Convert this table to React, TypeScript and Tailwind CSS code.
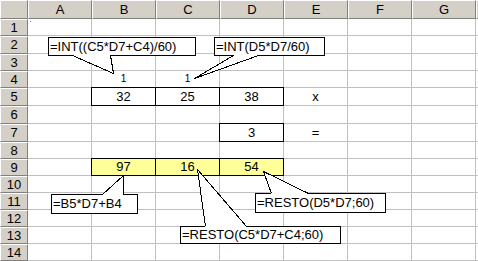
const cols = ["A", "B", "C", "D", "E", "F", "G", "H"];
const rows = Array.from({ length: 14 }, (_, i) => i + 1);

type Cell = { text: string; boxed?: boolean; yellow?: boolean; small?: boolean };

const cells: Record<string, Cell> = {
  B4: { text: "1", small: true },
  C4: { text: "1", small: true },
  B5: { text: "32", boxed: true },
  C5: { text: "25", boxed: true },
  D5: { text: "38", boxed: true },
  E5: { text: "x" },
  D7: { text: "3", boxed: true },
  E7: { text: "=" },
  B9: { text: "97", boxed: true, yellow: true },
  C9: { text: "16", boxed: true, yellow: true },
  D9: { text: "54", boxed: true, yellow: true },
};

type Callout = {
  text: string;
  box: string;
  base: [number, number][];
  tip: [number, number];
};

// text boxes with a wedge pointing at the cell they describe
const callouts: Callout[] = [
  {
    text: "=INT((C5*D7+C4)/60)",
    box: "left-[48px] top-[37px] w-[148px] h-[19px] leading-[17px]",
    base: [[72, 55], [110, 55]],
    tip: [113, 73],
  },
  {
    text: "=INT(D5*D7/60)",
    box: "left-[214px] top-[37px] w-[111px] h-[19px] leading-[17px]",
    base: [[233, 55], [258, 55]],
    tip: [194, 78],
  },
  {
    text: "=B5*D7+B4",
    box: "left-[51px] top-[194px] w-[87px] h-[20px] leading-[18px]",
    base: [[102, 194], [123, 194]],
    tip: [123, 175],
  },
  {
    text: "=RESTO(D5*D7;60)",
    box: "left-[255px] top-[193px] w-[131px] h-[20px] leading-[18px]",
    base: [[271, 193], [308, 193]],
    tip: [263, 171],
  },
  {
    text: "=RESTO(C5*D7+C4;60)",
    box: "left-[180px] top-[226px] w-[161px] h-[18px] leading-[16px]",
    base: [[205, 226], [246, 226]],
    tip: [197, 169],
  },
];

const header =
  "bg-[#d4d0c8] border-t border-l border-t-white border-l-white border-r border-b border-r-[#808080] border-b-[#808080] flex items-center justify-center text-[13px] text-black";

function GridCell({ id }: { id: string }) {
  const c = cells[id];
  const border = c?.boxed
    ? "border-black shadow-[-1px_-1px_0_#000,-1px_0_0_#000,0_-1px_0_#000]"
    : "border-[#c0c0c0]";
  const bg = c?.yellow ? "bg-[#ffff99]" : "bg-white";
  const txt = c?.small ? "text-[10px] leading-[16px]" : "text-[13px] leading-[16px]";
  return (
    <div className={`border-r border-b ${border} ${bg} flex items-center justify-center ${txt} text-black`}>
      {c?.text}
    </div>
  );
}

function Wedge({ c }: { c: Callout }) {
  const [[x1, y1], [x2, y2]] = c.base;
  const [tx, ty] = c.tip;
  const p = (x: number, y: number) => `${x + 0.5},${y + 0.5}`;
  return (
    <g shapeRendering="crispEdges">
      <polygon points={`${p(x1, y1)} ${p(tx, ty)} ${p(x2, y2)}`} fill="#fff" />
      <line x1={x1 + 1} y1={y1 + 0.5} x2={x2} y2={y2 + 0.5} stroke="#fff" strokeWidth={1} />
      <polyline points={`${p(x1, y1)} ${p(tx, ty)} ${p(x2, y2)}`} fill="none" stroke="#000" strokeWidth={1} />
    </g>
  );
}

export default function App() {
  return (
    <div className="relative w-[478px] h-[261px] overflow-hidden bg-white font-['Liberation_Sans',Arial,sans-serif]">
      <div className="grid grid-cols-[28px_repeat(8,64px)] grid-rows-[19px_17px_18px_17px_17px_18px_18px_18px_17px_17px_17px_17px_17px_17px_17px]">
        <div className={header} />
        {cols.map((col) => (
          // column H only peeks in at the right edge, its letter is out of view
          <div key={col} className={header}>
            {col === "H" ? null : col}
          </div>
        ))}
        {rows.map((r) => [
          <div key={`h${r}`} className={header}>
            {r}
          </div>,
          ...cols.map((col) => <GridCell key={`${col}${r}`} id={`${col}${r}`} />),
        ])}
      </div>

      <span className="absolute left-[30px] top-[21px] size-px bg-[#808080]" />

      {callouts.map((c) => (
        <div
          key={c.text}
          className={`absolute ${c.box} border border-black bg-white pl-px text-[13px] text-black whitespace-nowrap`}
        >
          {c.text}
        </div>
      ))}
      <svg className="absolute left-0 top-0 pointer-events-none" width={478} height={261}>
        {callouts.map((c) => (
          <Wedge key={c.text} c={c} />
        ))}
      </svg>
    </div>
  );
}
